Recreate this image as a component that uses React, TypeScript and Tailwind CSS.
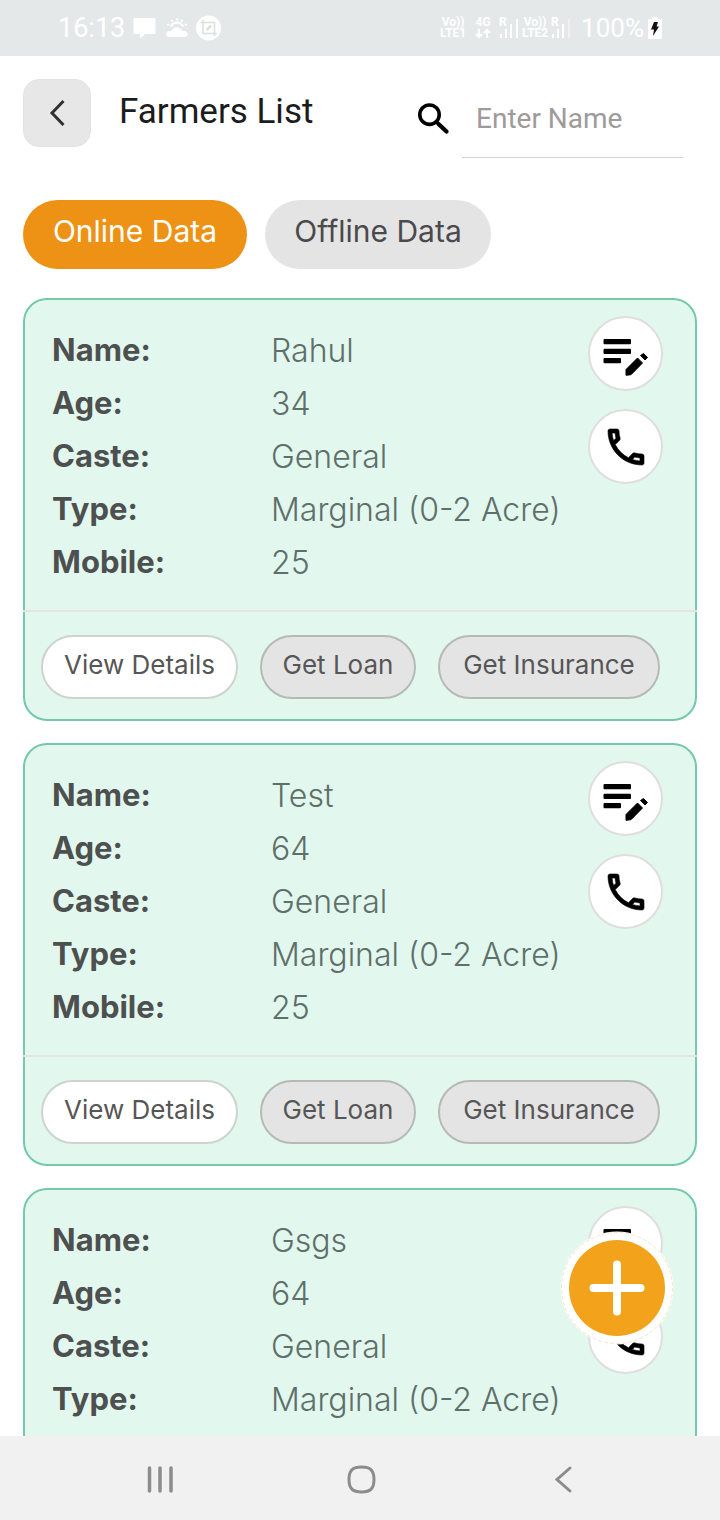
import type { ReactNode } from "react";
import { MdOutlinePhone } from "react-icons/md";

interface Farmer {
  name: string;
  age: string;
  caste: string;
  type: string;
  mobile: string;
}

const farmers: Farmer[] = [
  { name: "Rahul", age: "34", caste: "General", type: "Marginal (0-2 Acre)", mobile: "25" },
  { name: "Test", age: "64", caste: "General", type: "Marginal (0-2 Acre)", mobile: "25" },
  { name: "Gsgs", age: "64", caste: "General", type: "Marginal (0-2 Acre)", mobile: "25" },
];

function NetworkLabel({ top, bottom }: { top: string; bottom: ReactNode }) {
  return (
    <span className="flex w-7 flex-col items-center text-[12px] leading-[11px] font-bold">
      <span>{top}</span>
      <span>{bottom}</span>
    </span>
  );
}

function DataArrows() {
  return (
    <svg className="h-[11px] w-4" viewBox="0 0 16 11" fill="none" stroke="white" strokeWidth="2" aria-hidden="true">
      <path d="M4 1v8M1 6l3 3 3-3M12 10V2M9 5l3-3 3 3" />
    </svg>
  );
}

function RoamingSignal({ weak = false }: { weak?: boolean }) {
  return (
    <span className="flex w-5 items-start">
      <span className="w-0 text-[12px] leading-[11px] font-bold">R</span>
      <svg className="h-[22px] w-5 shrink-0" viewBox="0 0 20 22" fill="white" aria-hidden="true">
        <rect x="1" y="17" width="2" height="4" />
        <rect x="6" y="12" width="2" height="9" />
        <rect x="11" y="7" width="2" height="14" />
        <rect x="17" y="2" width="2" height="19" opacity={weak ? 0.4 : 1} />
      </svg>
    </span>
  );
}

function StatusBar() {
  return (
    <div className="flex h-14 shrink-0 items-center justify-between bg-[#e5e8e9] pr-[58px] pl-[58px] text-white">
      <div className="flex items-center gap-2">
        <span className="text-[27px] leading-8">16:13</span>
        <svg className="h-7 w-[88px]" viewBox="0 0 88 28" aria-hidden="true">
          <path d="M1.500 4h20q1 0 1 1v14q0 1-1 1H12l-5 5v-5H1.500q-1 0-1-1V5q0-1 1-1z" fill="white" />
          <g fill="none" stroke="white" strokeWidth="2" strokeLinecap="round">
            <path d="M38 12a7 7 0 0 1 12 0" />
            <path d="M44 5v.5M39 6.500l.3.4M49 6.500l-.3.4M35 10.500l.4.200M53 10.500l-.4.200" />
          </g>
          <path d="M36 23a3 3 0 0 1 .5-6q2 0 3-1.500a5 5 0 0 1 8.500 0q1 1.500 3 1.500a3 3 0 0 1 1 6z" fill="white" />
          <circle cx="75.500" cy="14" r="12.500" fill="white" />
          <g fill="none" stroke="#dde0e0" strokeWidth="1.600">
            <path d="M67.500 8.500h14V22M70 6v13.500h14" />
            <path d="M73.500 16l4.500-4.500" strokeWidth="2.500" />
          </g>
        </svg>
      </div>
      <div className="flex items-center">
        <div className="flex items-center gap-[2px]">
          <NetworkLabel top="Vo))" bottom="LTE1" />
          <NetworkLabel top="4G" bottom={<DataArrows />} />
          <RoamingSignal />
          <NetworkLabel top="Vo))" bottom="LTE2" />
          <RoamingSignal weak />
        </div>
        <span className="ml-2.5 text-[26px] leading-8">100%</span>
        <svg className="ml-1 h-6 w-[14px]" viewBox="0 0 14 24" aria-hidden="true">
          <path d="M4 1h6v2h3q1 0 1 1v18q0 1-1 1H1q-1 0-1-1V4q0-1 1-1h3z" fill="white" />
          <path d="M6 6h4l-1.500 4.500H11L5 20l1-6.500H3z" fill="#111" />
        </svg>
      </div>
    </div>
  );
}

function Header() {
  return (
    <header className="flex items-start pt-[23px] pr-[37px] pl-[23px]">
      <button
        type="button"
        aria-label="Back"
        className="flex size-[68px] shrink-0 items-center justify-center rounded-2xl border border-[#e3e3e3] bg-[#e7e7e7]"
      >
        <svg className="h-8 w-6" viewBox="0 0 24 32" fill="none" stroke="#303030" strokeWidth="3" aria-hidden="true">
          <path d="M18.500 4L7 16l11.500 12" />
        </svg>
      </button>
      <h1 className="ml-7 flex-1 pt-2 text-[35px] leading-[50px] text-[#1c1c1c]">Farmers List</h1>
      <div className="flex items-center">
        <svg className="size-[42px]" viewBox="0 0 42 42" fill="none" stroke="black" aria-hidden="true">
          <circle cx="17.500" cy="16.700" r="9.700" strokeWidth="3.600" />
          <path d="M24 23.500l3 3" strokeWidth="3" />
          <path d="M26.500 26l8 7.500" strokeWidth="4.300" strokeLinecap="round" />
        </svg>
        <input
          type="text"
          aria-label="Enter Name"
          placeholder="Enter Name"
          className="ml-2 h-[79px] w-[221px] border-b border-[#d2d2d2] px-[14px] text-[28px] text-[#333] outline-none placeholder:text-[#9e9a9b]"
        />
      </div>
    </header>
  );
}

function EditIcon() {
  return (
    <svg className="size-[60px] shrink-0" viewBox="0 0 60 60" aria-hidden="true">
      <rect x="7.500" y="15" width="27.500" height="5.300" rx="1" />
      <rect x="7.500" y="24.700" width="27.500" height="5.300" rx="1" />
      <rect x="7.500" y="34" width="17.500" height="5.300" rx="1" />
      <path
        d="M30 45.500L41.500 34l5 5L35 50.700L30 51.300zM44.500 31.500L47.500 29.500L51.500 33.500L49 36z"
        stroke="black"
        strokeLinejoin="round"
      />
    </svg>
  );
}

function Row({ label, children }: { label: string; children: ReactNode }) {
  return (
    <div className="flex h-[53px] items-center">
      <dt className="w-[219px] shrink-0 text-[31px] font-bold text-[#4d504e]">{label}:</dt>
      <dd className="text-[32px] font-light whitespace-nowrap text-[#5f6f69]">{children}</dd>
    </div>
  );
}

const roundButton =
  "flex size-[75px] items-center justify-center rounded-full border-2 border-[#dedede] bg-white text-black";
const pill = "h-16 rounded-full border-2 pb-1.5 text-[26px] text-[#565656]";

function FarmerCard({ farmer }: { farmer: Farmer }) {
  return (
    <article className="shrink-0 rounded-3xl border-2 border-[#74c9a9] bg-[#e2f8ef]">
      <div className="flex justify-between pr-8 pl-[27px]">
        <dl className="pt-6 pb-[21px]">
          <Row label="Name">{farmer.name}</Row>
          <Row label="Age">{farmer.age}</Row>
          <Row label="Caste">{farmer.caste}</Row>
          <Row label="Type">{farmer.type}</Row>
          <Row label="Mobile">{farmer.mobile}</Row>
        </dl>
        <div className="flex flex-col gap-[18px] pt-4">
          <button type="button" aria-label={`Edit ${farmer.name}`} className={roundButton}>
            <EditIcon />
          </button>
          <button type="button" aria-label={`Call ${farmer.name}`} className={roundButton}>
            <MdOutlinePhone className="size-12 [&>path:last-child]:stroke-black [&>path:last-child]:stroke-[0.3]" />
          </button>
        </div>
      </div>
      <div className="-mx-[2px] h-[2px] bg-[#e6e3e3]" />
      <div className="flex gap-[22px] px-4 pt-[23px] pb-5">
        <button type="button" className={`${pill} w-[197px] border-[#ccd3d0] bg-white`}>
          View Details
        </button>
        <button type="button" className={`${pill} w-[156px] border-[#b5bab8] bg-[#e4e4e4]`}>
          Get Loan
        </button>
        <button type="button" className={`${pill} w-[222px] border-[#b5bab8] bg-[#e4e4e4]`}>
          Get Insurance
        </button>
      </div>
    </article>
  );
}

function AddButton() {
  return (
    <button
      type="button"
      aria-label="Add farmer"
      className="absolute right-[46px] bottom-[91px] size-[114px] rounded-full"
    >
      <svg viewBox="0 0 114 114" aria-hidden="true">
        <circle cx="57" cy="57" r="56.500" fill="white" />
        <circle cx="57" cy="57" r="55.500" fill="none" stroke="#f5c98a" strokeWidth="0.500" strokeDasharray="4 2" />
        <circle cx="57" cy="57" r="48" fill="#f3a21b" />
        <path d="M57 33.500v47M33.500 57h47" stroke="white" strokeWidth="8" strokeLinecap="round" />
      </svg>
    </button>
  );
}

function NavigationBar() {
  const icon = "h-9 w-9";
  return (
    <nav className="flex h-[84px] shrink-0 items-center justify-between bg-[#f1f1f1] px-[142px]">
      <button type="button" aria-label="Recent apps">
        <svg className={icon} viewBox="0 0 36 36" stroke="#8c8c8c" strokeWidth="3.500" strokeLinecap="round">
          <path d="M7.500 8v23M18 8v23M29 8v23" />
        </svg>
      </button>
      <button type="button" aria-label="Home">
        <svg className={icon} viewBox="0 0 36 36" fill="none" stroke="#8c8c8c" strokeWidth="3">
          <path d="M19.500 7c9 0 12.500 3.500 12.500 12.500S28.500 32 19.500 32 7 28.500 7 19.500 10.500 7 19.500 7z" />
        </svg>
      </button>
      <button type="button" aria-label="System back">
        <svg className={icon} viewBox="0 0 36 36" fill="none" stroke="#8c8c8c" strokeWidth="3" strokeLinecap="round">
          <path d="M28 8L15 19.500 28 31" />
        </svg>
      </button>
    </nav>
  );
}

export default function App() {
  const tab = "h-[69px] rounded-full pb-1.5 text-[30px]";
  return (
    <div className="flex h-screen flex-col overflow-hidden bg-white font-[Roboto,sans-serif]">
      <StatusBar />
      <div className="relative flex min-h-0 flex-1 flex-col">
        <Header />
        <div className="flex gap-[18px] px-[23px] pt-[42px] font-[Inter,sans-serif]">
          <button type="button" className={`${tab} w-[224px] bg-[#ed9215] text-white`}>
            Online Data
          </button>
          <button type="button" className={`${tab} w-[226px] bg-[#e4e4e4] text-[#4a4a4c]`}>
            Offline Data
          </button>
        </div>
        <main className="mt-[29px] flex min-h-0 flex-1 flex-col gap-[22px] overflow-y-auto px-[23px] font-[Inter,sans-serif] [scrollbar-width:none]">
          {farmers.map((farmer) => (
            <FarmerCard key={farmer.name} farmer={farmer} />
          ))}
        </main>
        <AddButton />
      </div>
      <NavigationBar />
    </div>
  );
}
